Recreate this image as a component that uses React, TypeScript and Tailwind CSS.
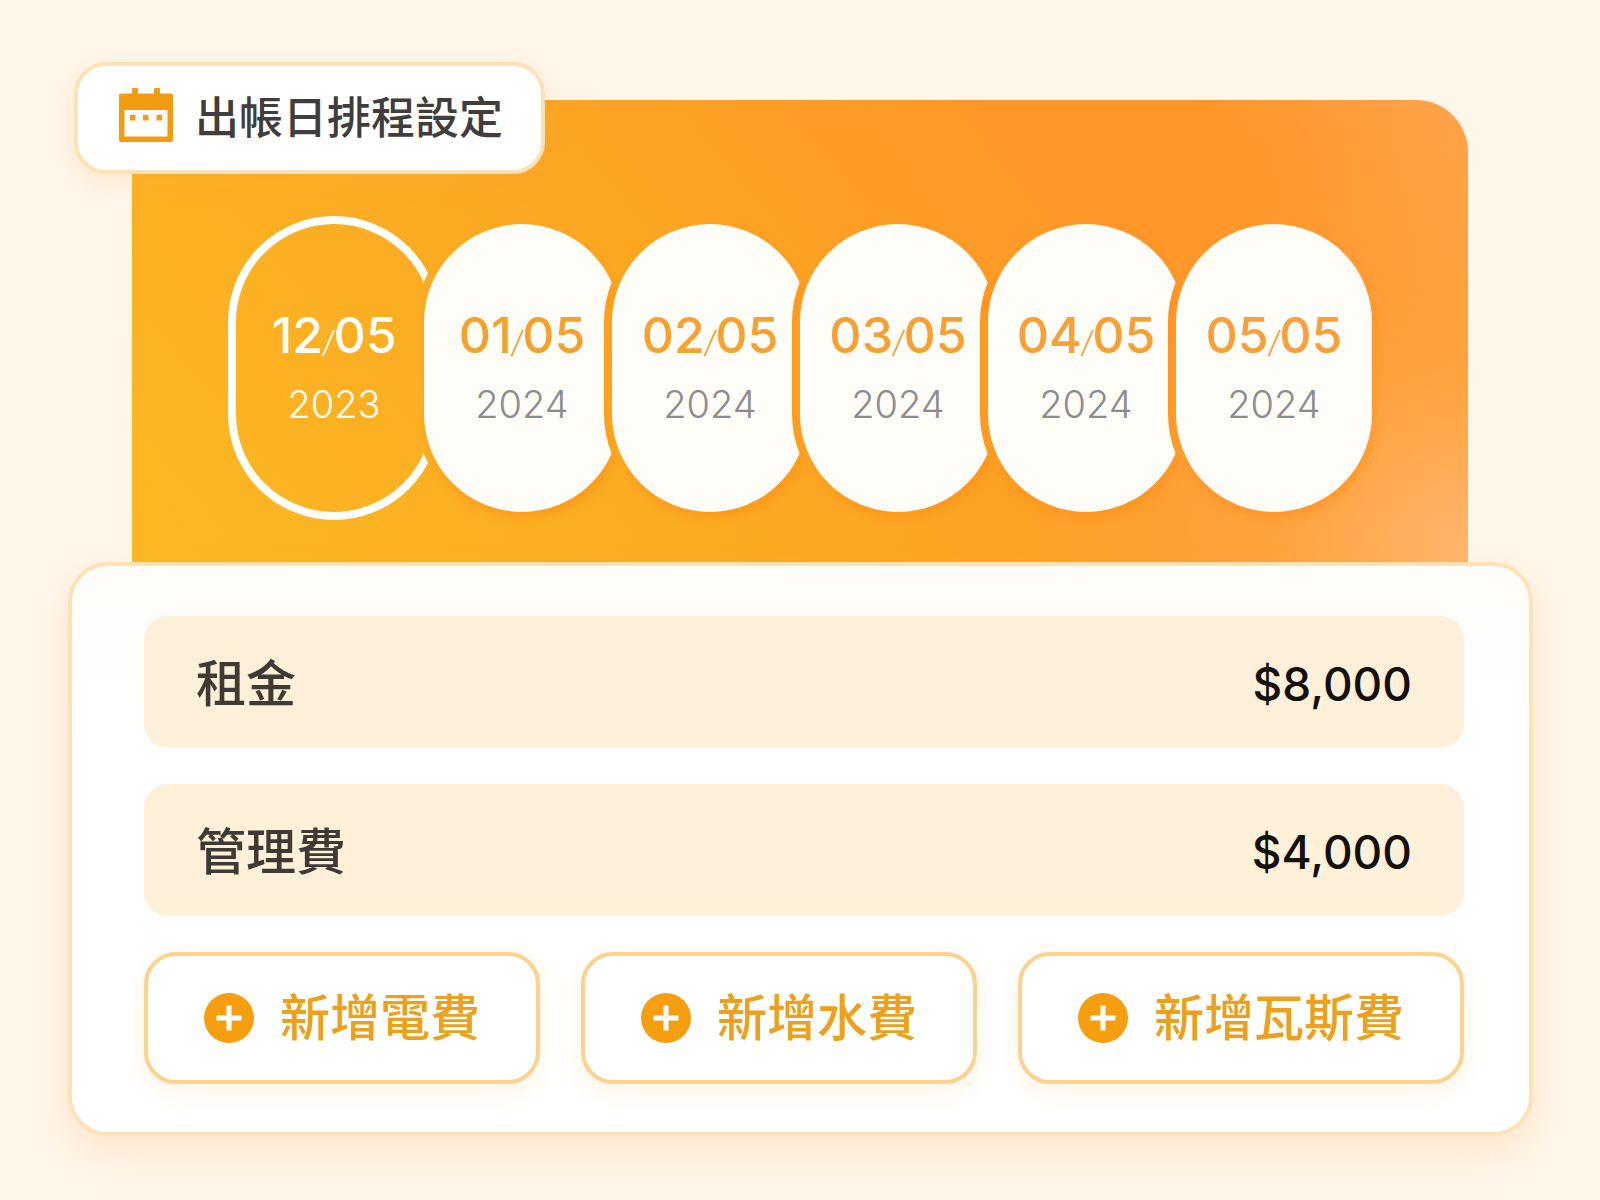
import { useId } from "react";

const schedule = [
  { month: "12", day: "05", year: "2023", current: true, color: "text-[#fffdf8]" },
  { month: "01", day: "05", year: "2024", current: false, color: "text-[#f3a22e]" },
  { month: "02", day: "05", year: "2024", current: false, color: "text-[#f5a230]" },
  { month: "03", day: "05", year: "2024", current: false, color: "text-[#f6a032]" },
  { month: "04", day: "05", year: "2024", current: false, color: "text-[#f89f35]" },
  { month: "05", day: "05", year: "2024", current: false, color: "text-[#fa9f39]" },
];

const fees = [
  { label: "租金", amount: "$8,000" },
  { label: "管理費", amount: "$4,000" },
];

const actions = ["新增電費", "新增水費", "新增瓦斯費"];

function CalendarIcon() {
  return (
    <svg viewBox="0 0 54 54" className="size-[54px] shrink-0" fill="#f39c12" aria-hidden="true">
      <rect x="13" y="0" width="6" height="8" rx="1" />
      <rect x="35" y="0" width="6" height="8" rx="1" />
      <path
        fillRule="evenodd"
        d="M2 5.5h50a2 2 0 0 1 2 2V52a2 2 0 0 1-2 2H2a2 2 0 0 1-2-2V7.5a2 2 0 0 1 2-2ZM5.5 22v26.5h43V22Z"
      />
      <rect x="11" y="27" width="5.5" height="5.5" />
      <rect x="24" y="27" width="5.5" height="5.5" />
      <rect x="37.5" y="27" width="5.5" height="5.5" />
    </svg>
  );
}

function PlusIcon() {
  return (
    <svg viewBox="0 0 50 50" className="size-[50px] shrink-0" aria-hidden="true">
      <circle cx="25" cy="25" r="25" fill="#f59e0f" />
      <path d="M25 12.5v25M12.5 25h25" stroke="#fff" strokeWidth="5" />
    </svg>
  );
}

// Pill outline; the right side is notched where the next pill overlaps it.
function PillShape({ current, last }: { current: boolean; last: boolean }) {
  const maskId = useId();

  return (
    <svg
      viewBox="0 0 212 304"
      className={`col-start-1 row-start-1 h-[304px] w-[212px] overflow-visible ${
        current ? "" : "drop-shadow-[3px_6px_4px_rgba(255,140,20,0.5)]"
      }`}
      aria-hidden="true"
    >
      <mask id={maskId} maskUnits="userSpaceOnUse" x="0" y="0" width="212" height="304">
        <rect width="212" height="304" fill="#fff" />
        {!last && <rect x="188" y="0" width="212" height="304" rx="106" fill="#000" />}
      </mask>
      {current ? (
        <rect
          x="4"
          y="4"
          width="204"
          height="296"
          rx="102"
          fill="none"
          stroke="#fffefb"
          strokeWidth="8"
          mask={`url(#${maskId})`}
        />
      ) : (
        <rect x="8" y="8" width="196" height="288" rx="98" fill="#fffdf8" mask={`url(#${maskId})`} />
      )}
    </svg>
  );
}

export default function App() {
  return (
    <main className="min-h-screen bg-[#fff6ea] pt-[62px] pr-[67px] pb-16 pl-[68px] font-['Inter','Noto_Sans_CJK_TC',sans-serif]">
      <h1 className="relative z-10 ml-[6px] flex w-fit items-center gap-[22px] rounded-[32px] border-4 border-[#fde2b5] bg-white pt-[18px] pr-[38px] pb-6 pl-[41px] font-['Noto_Sans_CJK_TC',sans-serif] text-[44px] leading-[62px] font-medium text-[#403d3b] shadow-[0_8px_24px_rgba(250,170,80,0.18)]">
        <CalendarIcon />
        出帳日排程設定
      </h1>

      <section className="mr-[65px] -mt-[74px] ml-16 rounded-tr-[52px] bg-[radial-gradient(circle_at_100%_100%,#ffb76c_0%,rgba(255,168,76,0.6)_14%,rgba(255,150,40,0)_32%),linear-gradient(50deg,#fbb922_0%,#fca622_45%,#ff9628_74%,#ff9628_84%,#ffa34c_100%)] pt-[116px] pr-[88px] pb-[42px] pl-24">
        <ol className="flex justify-center">
          {schedule.map((item, index) => (
            <li
              key={item.month}
              className="-ml-6 grid shrink-0 place-items-center first:ml-0"
            >
              <PillShape current={item.current} last={index === schedule.length - 1} />
              <div className="relative col-start-1 row-start-1 flex flex-col items-center">
                <p className={`text-[50px] leading-[64px] font-medium ${item.color}`}>
                  {item.month}
                  <span className="text-[30px] font-light italic">/</span>
                  {item.day}
                </p>
                <p
                  className={`text-[38px] leading-[60px] font-light ${
                    item.current ? "text-[#fffdf8]" : "text-[#8c8c8c]"
                  }`}
                >
                  {item.year}
                </p>
              </div>
            </li>
          ))}
        </ol>
      </section>

      <section className="relative rounded-[40px] border-4 border-[#fde2b5] bg-[linear-gradient(180deg,#fffdf9_0%,#ffffff_30%)] pt-[50px] pr-[65px] pb-12 pl-[72px] shadow-[0_16px_36px_rgba(250,165,80,0.2)]">
        <dl className="flex flex-col gap-9">
          {fees.map((fee) => (
            <div
              key={fee.label}
              className="flex h-[132px] items-center justify-between rounded-[24px] bg-[#fff0d9] px-[52px] pt-1 font-medium"
            >
              <dt className="text-[50px] text-[#403a34]">{fee.label}</dt>
              <dd className="text-[46px] text-[#14100c]">{fee.amount}</dd>
            </div>
          ))}
        </dl>

        <div className="mt-9 flex flex-wrap justify-between gap-y-9">
          {actions.map((action) => (
            <button
              key={action}
              type="button"
              className="flex h-[132px] items-center gap-[26px] rounded-[32px] border-4 border-[#fbd28e] bg-white px-14 text-[50px] font-medium text-[#eca01c] shadow-[0_8px_24px_rgba(250,190,90,0.16)]"
            >
              <PlusIcon />
              {action}
            </button>
          ))}
        </div>
      </section>
    </main>
  );
}
